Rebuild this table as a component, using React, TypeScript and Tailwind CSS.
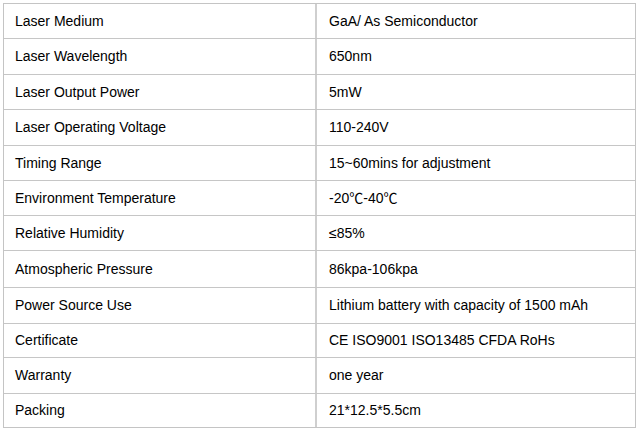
import React from "react";

const rows: [string, string, number][] = [
  ["Laser Medium", "GaA/ As Semiconductor", 35],
  ["Laser Wavelength", "650nm", 36],
  ["Laser Output Power", "5mW", 35],
  ["Laser Operating Voltage", "110-240V", 36],
  ["Timing Range", "15~60mins for adjustment", 35],
  ["Environment Temperature", "-20℃-40℃", 35],
  ["Relative Humidity", "≤85%", 35],
  ["Atmospheric Pressure", "86kpa-106kpa", 37],
  ["Power Source Use", "Lithium battery with capacity of 1500 mAh", 36],
  ["Certificate", "CE ISO9001 ISO13485 CFDA RoHs", 34],
  ["Warranty", "one year", 36],
  ["Packing", "21*12.5*5.5cm", 34],
];

export default function App() {
  return (
    <div
      className="w-[640px] h-[432px] bg-white pt-[3px] pl-[3px]"
      style={{ fontFamily: '"Liberation Sans", Arial, "Noto Sans CJK SC", sans-serif' }}
    >
      <div className="w-[633px] border border-[#c4c4c4] flex flex-col">
        {rows.map(([k, v, h], i) => (
          <div
            key={k}
            className={`flex ${i < rows.length - 1 ? "border-b border-[#c6c6c6]" : ""}`}
            style={{ height: i < rows.length - 1 ? h : h - 1 }}
          >
            <div className="w-[313px] shrink-0 border-r-2 border-[#cfcfcf] flex items-center pl-[11px] text-[14px] text-black">
              {k}
            </div>
            <div className="flex-1 flex items-center pl-[12px] text-[14px] text-black">
              {v}
            </div>
          </div>
        ))}
      </div>
    </div>
  );
}
